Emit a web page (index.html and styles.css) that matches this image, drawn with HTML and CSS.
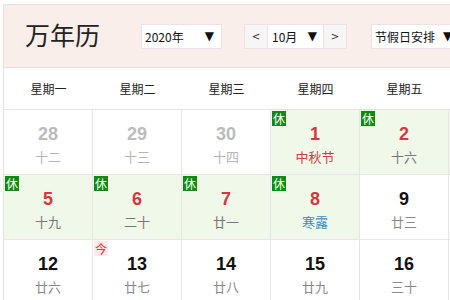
FILE: index.html
```html
<!DOCTYPE html>
<html lang="zh-CN">
<head>
<meta charset="utf-8">
<title>万年历</title>
<link rel="stylesheet" href="styles.css">
</head>
<body>
<div class="cal">
  <div class="head">
    <div class="title">万年历</div>
    <div class="sel year"><span>2020年</span><span class="arr">▼</span></div>
    <div class="month-nav">
      <div class="btn">&lt;</div>
      <div class="sel month"><span>10月</span><span class="arr">▼</span></div>
      <div class="btn">&gt;</div>
    </div>
    <div class="sel hol"><span>节假日安排</span><span class="arr">▼</span></div>
  </div>
  <div class="week">
    <div>星期一</div><div>星期二</div><div>星期三</div><div>星期四</div><div>星期五</div><div>星期六</div><div>星期日</div>
  </div>
  <div class="grid">
    <div class="day other"><b>28</b><i>十二</i></div>
    <div class="day other"><b>29</b><i>十三</i></div>
    <div class="day other"><b>30</b><i>十四</i></div>
    <div class="day rest"><span class="tag">休</span><b>1</b><i class="fest">中秋节</i></div>
    <div class="day rest"><span class="tag">休</span><b>2</b><i>十六</i></div>
    <div class="day rest"><span class="tag">休</span><b>3</b><i>十七</i></div>
    <div class="day rest"><span class="tag">休</span><b>4</b><i>十八</i></div>

    <div class="day rest"><span class="tag">休</span><b>5</b><i>十九</i></div>
    <div class="day rest"><span class="tag">休</span><b>6</b><i>二十</i></div>
    <div class="day rest"><span class="tag">休</span><b>7</b><i>廿一</i></div>
    <div class="day rest"><span class="tag">休</span><b>8</b><i class="term">寒露</i></div>
    <div class="day"><b>9</b><i>廿三</i></div>
    <div class="day"><b>10</b><i>廿四</i></div>
    <div class="day"><b>11</b><i>廿五</i></div>

    <div class="day"><b>12</b><i>廿六</i></div>
    <div class="day"><span class="today">今</span><b>13</b><i>廿七</i></div>
    <div class="day"><b>14</b><i>廿八</i></div>
    <div class="day"><b>15</b><i>廿九</i></div>
    <div class="day"><b>16</b><i>三十</i></div>
    <div class="day"><b>17</b><i>九月</i></div>
    <div class="day"><b>18</b><i>初二</i></div>
  </div>
</div>
</body>
</html>
```
FILE: styles.css
```css
html, body {
  margin: 0;
  padding: 0;
  background: #fff;
  overflow: hidden;
}
body {
  font-family: "Liberation Sans", "Noto Sans CJK SC", sans-serif;
  color: #222;
}
.cal {
  margin: 4px 0 0 3px;
  width: 623px;
  border: 1px solid #ecdfdf;
}
.head {
  height: 62px;
  background: #faeeea;
  border-bottom: 1px solid #ecdfdf;
  display: flex;
  align-items: center;
  padding-left: 21px;
}
.title {
  font-size: 25px;
  color: #222;
  width: 116px;
  margin-top: -4px;
  font-family: "Noto Sans CJK SC", sans-serif;
}
.sel {
  height: 23px;
  background: #fff;
  border: 1px solid #ece4e4;
  display: flex;
  align-items: center;
  justify-content: space-between;
  font-size: 12px;
  color: #111;
  padding: 0 7px 0 3px;
  box-sizing: content-box;
  font-family: "Noto Sans CJK SC", sans-serif;
}
.sel .arr { font-size: 12px; font-family: "DejaVu Sans", sans-serif; }
.year { width: 69px; }
.month-nav {
  display: flex;
  margin-left: 22px;
}
.btn {
  width: 22px;
  height: 23px;
  border: 1px solid #ece4e4;
  background: #f7f5f5;
  display: flex;
  align-items: center;
  justify-content: center;
  font-size: 10px;
  color: #333;
  font-family: "DejaVu Sans", sans-serif;
}
.month { width: 45px; border-left: 0; border-right: 0; padding: 0 6px 0 4px; }
.hol {
  margin-left: 24px;
  justify-content: flex-start;
  gap: 8px;
  flex-shrink: 0;
}
.week {
  display: grid;
  grid-template-columns: repeat(7, 89px);
  height: 41px;
  border-bottom: 1px solid #e8e2e2;
}
.week div {
  display: flex;
  align-items: center;
  justify-content: center;
  font-size: 12px;
  color: #222;
  font-family: "Noto Sans CJK SC", sans-serif;
}
.grid {
  display: grid;
  grid-template-columns: repeat(7, 89px);
  grid-auto-rows: 65px;
}
.day {
  position: relative;
  border-right: 1px solid #e6e6e6;
  border-bottom: 1px solid #e6e6e6;
  display: flex;
  flex-direction: column;
  align-items: center;
  padding-top: 14px;
  box-sizing: border-box;
}
.day b {
  font-size: 18px;
  font-weight: bold;
  line-height: 20px;
  color: #111;
}
.day i {
  font-style: normal;
  font-size: 13px;
  line-height: 16px;
  margin-top: 5px;
  color: #888;
  font-family: "Noto Sans CJK SC", sans-serif;
}
.other b { color: #bbb; }
.other i { color: #b5b5b5; }
.rest { background: #f0f8ea; }
.rest b { color: #d4383d; }
.rest i { color: #777; }
.rest i.fest { color: #c9423d; }
.rest i.term { color: #3b8cc0; }
.tag {
  position: absolute;
  left: 1px;
  top: 1px;
  width: 14px;
  height: 15px;
  background: #0b8c0b;
  color: #fff;
  font-size: 12px;
  line-height: 15px;
  text-align: center;
  font-family: "Noto Sans CJK SC", sans-serif;
}
.today {
  position: absolute;
  left: 1px;
  top: 1px;
  width: 14px;
  height: 15px;
  background: #fde9e9;
  color: #d23a3a;
  font-size: 12px;
  line-height: 15px;
  text-align: center;
  font-family: "Noto Sans CJK SC", sans-serif;
}
```
